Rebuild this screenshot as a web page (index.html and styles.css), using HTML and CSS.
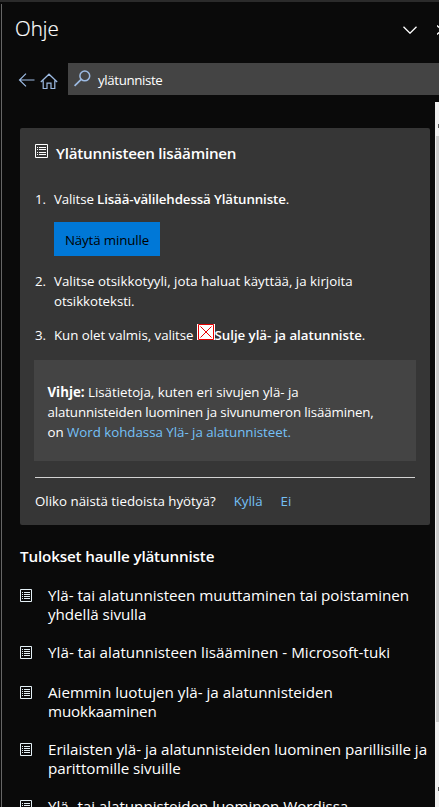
FILE: index.html
```html
<!DOCTYPE html>
<html lang="fi">
<head>
<meta charset="utf-8">
<title>Ohje</title>
<link rel="stylesheet" href="styles.css">
</head>
<body>
<svg width="0" height="0" class="defs">
  <symbol id="doc" viewBox="0 0 12 13"><path d="M.5.5h11v12H.5z" fill="none" stroke="currentColor"/><path d="M2 3.500h1M2 5.500h1M2 7.500h1M2 9.500h1M4 3.500h6M4 5.500h6M4 7.500h6M4 9.500h6" stroke="currentColor"/></symbol>
</svg>
<div class="pane">
  <header class="title-bar">
    <h1>Ohje</h1>
    <svg class="chevron" viewBox="0 0 14 8"><path d="M.5.7 7 7.2 13.500.7" fill="none" stroke="#fff" stroke-width="1.3"/></svg>
    <svg class="close" viewBox="0 0 2 10"><path d="M0 .5 2 2.500M2 7.500 0 9.500" fill="none" stroke="#fff" stroke-width="1.3"/></svg>
  </header>
  <nav class="toolbar">
    <svg class="back" viewBox="0 0 16 14"><path d="M16 7H1M7.500.6 1 7l6.500 6.400" fill="none" stroke="#9dbbe3" stroke-width="1.2"/></svg>
    <svg class="home" viewBox="0 0 18 17"><path d="M.8 9 9 1.200 17.200 9M3.200 7.500V15.500H7V10.200H11V15.500H14.800V7.500" fill="none" stroke="#9dbbe3" stroke-width="1.2"/></svg>
    <div class="search">
      <svg class="lens" viewBox="0 0 17 17"><circle cx="10.800" cy="5.900" r="4.900" fill="none" stroke="#9dbbe3" stroke-width="1.500"/><path d="M7.200 9.400.6 15.800" stroke="#9dbbe3" stroke-width="1.700"/></svg>
      <span class="query">ylätunniste</span>
    </div>
  </nav>
  <main>
    <section class="card">
      <h2><svg class="doc-large" viewBox="0 0 13 14"><path d="M.5.5h12v13H.5z" fill="none" stroke="#fff"/><path d="M2 3.500h1M2 5.500h1M2 8.500h1M2 10.500h1M4 3.500h7M4 5.500h7M4 8.500h7M4 10.500h7" stroke="#fff"/></svg><span>Ylätunnisteen lisääminen</span></h2>
      <ol class="steps">
        <li><span class="num">1.</span><div><span class="s1">Valitse <b>Lisää-välilehdessä Ylätunniste</b>.</span><button>Näytä minulle</button></div></li>
        <li><span class="num">2.</span><div><span>Valitse otsikkotyyli, jota haluat käyttää, ja kirjoita</span><br><span class="s2b">otsikkoteksti.</span></div></li>
        <li><span class="num">3.</span><div class="inline"><span class="s3">Kun olet valmis, valitse</span><svg class="missing" viewBox="0 0 18 16"><path fill="#fff" d="M0 0h18v16H0z"/><path d="M1.500.5h15v15h-15z" fill="none" stroke="#e60000"/><path d="M3.500 2.500l11 11M14.500 2.500l-11 11" stroke="#e60000"/></svg><span class="s3b"><b>Sulje ylä- ja alatunniste</b>.</span></div></li>
      </ol>
      <p class="tip"><span class="t1"><strong>Vihje:</strong> Lisätietoja, kuten eri sivujen ylä- ja</span><br><span class="t2">alatunnisteiden luominen ja sivunumeron lisääminen,</span><br><span class="t3">on <a>Word kohdassa Ylä- ja alatunnisteet.</a></span></p>
      <footer><span class="ask">Oliko näistä tiedoista hyötyä?</span><a class="yes">Kyllä</a><a>Ei</a></footer>
    </section>
    <h3>Tulokset haulle ylätunniste</h3>
    <ul class="results">
      <li><svg><use href="#doc"/></svg><div><span class="r1">Ylä- tai alatunnisteen muuttaminen tai poistaminen</span><br><span class="r1">yhdellä sivulla</span></div></li>
      <li><svg><use href="#doc"/></svg><div><span class="r3">Ylä- tai alatunnisteen lisääminen - Microsoft-tuki</span></div></li>
      <li><svg><use href="#doc"/></svg><div><span>Aiemmin luotujen ylä- ja alatunnisteiden</span><br><span class="r5">muokkaaminen</span></div></li>
      <li><svg><use href="#doc"/></svg><div><span class="r6">Erilaisten ylä- ja alatunnisteiden luominen parillisille ja</span><br><span class="r6">parittomille sivuille</span></div></li>
      <li><svg><use href="#doc"/></svg><div><span class="r1">Ylä- tai alatunnisteiden luominen Wordissa</span></div></li>
    </ul>
  </main>
  <div class="scrollbar"><i class="arrow up"></i><div class="thumb"></div><i class="arrow down"></i></div>
</div>
</body>
</html>
```
FILE: styles.css
```css
* { box-sizing: border-box; }
body { margin: 0; background: #0a0a0a; color: #fff; font: 13.3px/20px "Open Sans", "Noto Sans", sans-serif; white-space: nowrap; overflow: hidden; }
h1, h2, h3, p, ol, ul { margin: 0; padding: 0; list-style: none; }
svg { display: block; flex: none; }
.defs { position: absolute; }
b { font-weight: 600; }
a { color: #75c0f7; }
.pane { position: relative; width: 439px; height: 807px; overflow: hidden; border-top: 2px solid #2b2b2b; }
.pane::before { content: ""; position: absolute; left: 1px; top: 2px; width: 1px; height: 803px; background: #666; }
.title-bar { display: flex; height: 61px; padding: 12px 0 0 15px; align-items: flex-start; }
h1 { font-size: 20.5px; line-height: 28px; font-weight: 300; flex: 1; -webkit-text-stroke: .2px #fff; }
.chevron { width: 14px; height: 8px; margin: 12px 20px 0 0; }
.close { width: 2px; height: 10px; margin-top: 11px; }
.toolbar { display: flex; height: 32px; padding-left: 18px; }
.back { width: 17px; height: 14px; margin-top: 10px; }
.home { width: 18px; height: 17px; margin: 10px 10px 0 5px; }
.search { flex: 1; display: flex; background: #444; padding: 7px 0 0 6px; }
.lens { width: 17px; height: 17px; margin-right: 7px; }
.query { line-height: 20px; letter-spacing: -.37px; }
main { padding: 33px 0 0 20px; }
.card { width: 410px; height: 397px; background: #363636; border-radius: 2px; padding: 14px 14px 0; }
h2 { display: flex; font-size: 15.2px; line-height: 22px; font-weight: 600; letter-spacing: -.24px; }
.doc-large { width: 13px; height: 14px; margin: 2px 8px 0 1px; }
.steps { margin-top: 25px; }
.steps li { display: flex; margin-bottom: 14px; }
.num { width: 20px; padding-left: 1px; }
.s1 { letter-spacing: -.12px; }
.s2b { letter-spacing: -.07px; }
.s3 { letter-spacing: -.04px; }
.s3b { letter-spacing: -.04px; }
.inline { display: flex; }
.missing { width: 18px; height: 16px; margin: -1px 0 0 3px; }
button { display: block; width: 106px; height: 34px; margin-top: 13px; padding: 2px 0 0; border: 0; background: #0078d7; color: #000; font: inherit; font-weight: 500; letter-spacing: -.12px; margin-bottom: 1px; }
.tip { width: 382px; height: 101px; margin-top: 15px; background: #444; padding: 22px 13.500px; }
.steps li:last-child { margin-bottom: 0; }
.t1 { letter-spacing: -.02px; }
.t2 { letter-spacing: -.13px; }
.t3 { letter-spacing: -.02px; }
.card footer { display: flex; gap: 18px; margin: 16px 0 0 1px; width: 380px; border-top: 1px solid #d2d2d2; padding-top: 13px; }
h3 { font-size: 15.2px; font-weight: 600; line-height: 22px; margin-top: 20px; letter-spacing: -.15px; }
.results { font-size: 15.2px; line-height: 19.2px; margin-top: 19px; }
.results li { display: flex; min-height: 21.5px; margin-bottom: 18.6px; }
.results svg { width: 12px; height: 13px; margin: 2.500px 16px 0 0; color: #e4f0f6; }
.r1 { letter-spacing: -.04px; }
.r3 { letter-spacing: .04px; }
.r5 { letter-spacing: -.15px; }
.r6 { letter-spacing: -.05px; }
.scrollbar { position: absolute; top: 100px; right: 0; width: 4px; height: 705px; background: #f0f0f0; }
.thumb { position: absolute; left: 1px; top: 34px; width: 3px; height: 586px; background: #cdcdcd; }
.arrow { position: absolute; right: 0; width: 1px; height: 4px; background: #606060; }
.up { top: 22px; }
.down { bottom: 16px; }
```
